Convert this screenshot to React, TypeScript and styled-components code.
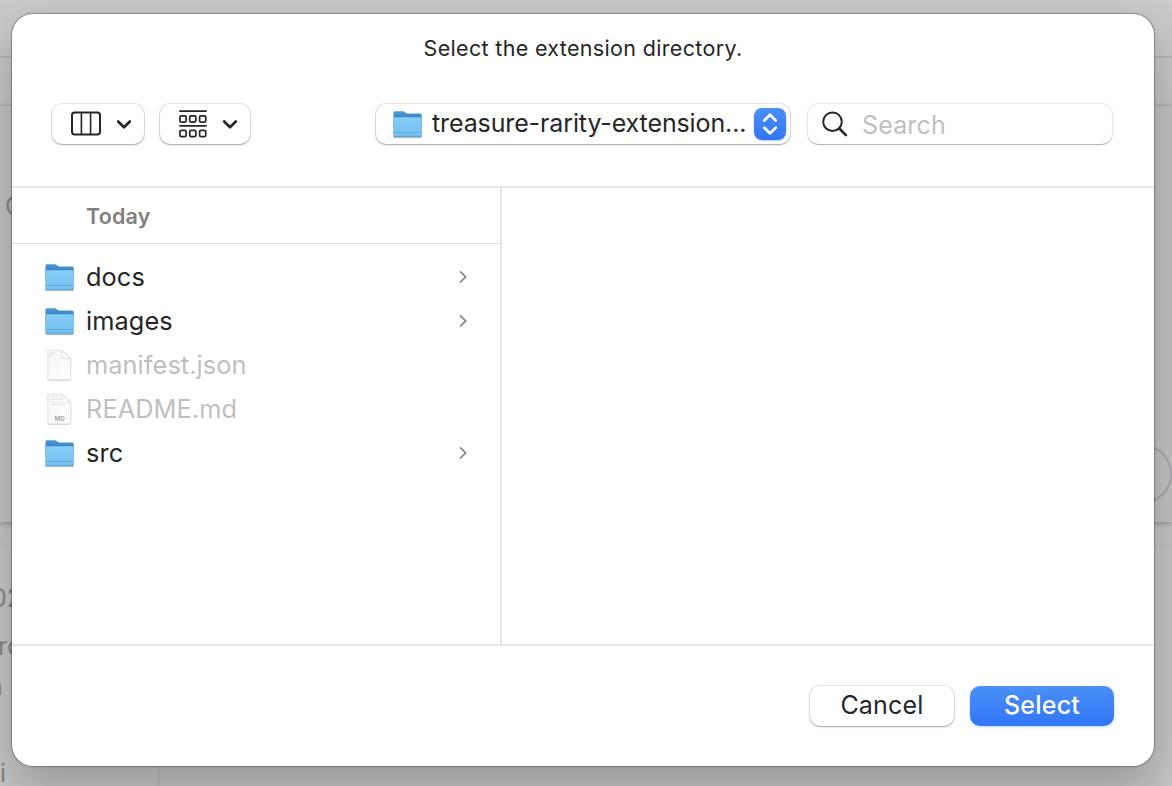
import React from "react";
import styled, { createGlobalStyle } from "styled-components";

const GlobalStyle = createGlobalStyle`
  * { box-sizing: border-box; }
  html, body { margin: 0; padding: 0; overflow: hidden; }
  body { font-family: Inter, "Liberation Sans", sans-serif; color: #262626; }
  button { font-family: inherit; color: inherit; border: 0; padding: 0; margin: 0; }
`;

const Window = styled.div`
  position: relative;
  width: 1172px;
  height: 786px;
  overflow: hidden;
  display: flex;
  flex-direction: column;
  background: #cbcbcb;
`;

const BackTitleBar = styled.div`
  height: 58px;
  flex: none;
  border-bottom: 2px solid #b9b9b9;
`;

const BackToolbar = styled.div`
  height: 48px;
  flex: none;
  background: #cbcbcb;
  border-bottom: 1px solid #c3c3c3;
`;

const BackCard = styled.div`
  height: 416px;
  flex: none;
  display: flex;
  justify-content: space-between;
  background: #c8c8c8;
  box-shadow: 0 1px 6px rgba(0, 0, 0, 0.3);
`;

const BackText = styled.span<{ $size: number; $top?: number; $left?: number }>`
  display: block;
  font-size: ${(p) => p.$size}px;
  line-height: 30px;
  height: 30px;
  color: #8b8b8b;
  white-space: nowrap;
  margin-top: ${(p) => p.$top ?? 0}px;
  margin-left: ${(p) => p.$left ?? 0}px;
`;

const BackRound = styled.div`
  width: 60px;
  height: 60px;
  margin-top: 338px;
  border: 2px solid #acacb2;
  border-radius: 50%;
`;

const BackLower = styled.div`
  flex: 1;
  margin-top: 23px;
  display: flex;
  border-top: 1px solid #c1c1c1;
`;

const BackSidebar = styled.div`
  width: 159px;
  border-right: 1px solid #bababa;
  background: #cccccc;
`;

const Dialog = styled.div`
  position: absolute;
  left: 12px;
  top: 14px;
  width: 1142px;
  height: 752px;
  display: flex;
  flex-direction: column;
  border-radius: 21px;
  background: #fff;
  box-shadow: 0 0 0 1px rgba(0, 0, 0, 0.2), 0 0 3px rgba(0, 0, 0, 0.2),
    0 24px 50px 6px rgba(0, 0, 0, 0.24);
`;

const Header = styled.header`
  height: 174px;
  flex: none;
  border-bottom: 2px solid #e5e5e5;
`;

const Title = styled.h1`
  margin: 0;
  padding-top: 20px;
  height: 89px;
  font-size: 21.5px;
  line-height: 28px;
  font-weight: 400;
  letter-spacing: 0.33px;
  text-align: center;
`;

const Toolbar = styled.div`
  display: flex;
  align-items: center;
  padding: 0 41px 0 40px;
  height: 42px;
`;

const Control = styled.button<{ $width: number; $gap?: number }>`
  display: flex;
  align-items: center;
  flex: none;
  width: ${(p) => p.$width}px;
  height: 40px;
  margin-right: ${(p) => p.$gap ?? 0}px;
  border-radius: 10px;
  background: #fff;
  box-shadow: 0 0 0 1px rgba(0, 0, 0, 0.08), 0 1px 1px rgba(0, 0, 0, 0.16),
    0 1px 3px rgba(0, 0, 0, 0.16);
`;

const FolderName = styled.span`
  flex: none;
  width: 321px;
  margin-left: 8px;
  text-align: left;
  font-size: 25px;
  line-height: 36px;
  height: 38px;
  letter-spacing: -0.12px;
  white-space: nowrap;
`;

const Stepper = styled.span`
  display: flex;
  width: 32px;
  height: 32px;
  margin-left: 1px;
  border-radius: 8px;
  background: linear-gradient(#4a90f8, #3175f6);
  box-shadow: 0 1px 2px rgba(49, 117, 246, 0.35);
`;

const SearchField = styled.label`
  display: flex;
  align-items: center;
  width: 304px;
  height: 40px;
  padding-left: 13px;
  border-radius: 10px;
  box-shadow: 0 0 0 1px rgba(0, 0, 0, 0.08), 0 1px 1px rgba(0, 0, 0, 0.24);
`;

const Placeholder = styled.span`
  margin-left: 13px;
  padding-top: 2px;
  font-size: 25px;
  line-height: 38px;
  letter-spacing: 0.15px;
  color: #bfbfbf;
`;

const Browser = styled.main`
  display: flex;
  height: 456px;
  flex: none;
`;

const Column = styled.section`
  width: 490px;
  border-right: 2px solid #e5e5e5;
`;

const GroupHeading = styled.h2`
  margin: 0;
  height: 56px;
  padding-left: 74px;
  border-bottom: 1px solid #dcdcdc;
  font-size: 21.5px;
  font-weight: 600;
  line-height: 57px;
  letter-spacing: 0.2px;
  color: #808080;
`;

const FileList = styled.ul`
  list-style: none;
  margin: 0;
  padding: 11px 31px 0 32px;
`;

const FileRow = styled.li<{ $dimmed?: boolean }>`
  display: flex;
  align-items: center;
  height: 44px;
  font-size: 25.3px;
  color: ${(p) => (p.$dimmed ? "#bfbfbf" : "#262626")};
`;

const FileName = styled.span`
  flex: 1;
  margin-left: 10px;
  line-height: 42px;
  letter-spacing: 0.1px;
`;

const Footer = styled.footer`
  display: flex;
  flex: 1;
  justify-content: flex-end;
  gap: 16px;
  padding: 40px 40px 0 0;
  border-top: 2px solid #e5e5e5;
`;

const ActionButton = styled.button<{ $primary?: boolean }>`
  width: 144px;
  height: 40px;
  border-radius: 10px;
  padding-bottom: 2px;
  font-size: 25px;
  line-height: 38px;
  letter-spacing: 0.2px;
  font-weight: ${(p) => (p.$primary ? 500 : 400)};
  color: ${(p) => (p.$primary ? "#fff" : "#262626")};
  background: ${(p) => (p.$primary ? "linear-gradient(#4a90f8, #3175f6)" : "#fff")};
  box-shadow: ${(p) =>
    p.$primary
      ? "0 1px 3px rgba(49, 117, 246, 0.3)"
      : "0 0 0 1px rgba(0,0,0,.08), 0 1px 1px rgba(0,0,0,.16), 0 1px 3px rgba(0,0,0,.16)"};
`;

const Icon = styled.svg<{ $left?: number }>`
  display: block;
  flex: none;
  margin-left: ${(p) => p.$left ?? 0}px;
`;

const FolderIcon = ({ left = 0 }: { left?: number }) => (
  <Icon $left={left} width="32" height="32" viewBox="0 0 32 32">
    <defs>
      <linearGradient id="folderFront" x1="0" y1="0" x2="0" y2="1">
        <stop offset="0" stopColor="#86cdf9" />
        <stop offset="1" stopColor="#74c0f1" />
      </linearGradient>
      <linearGradient id="folderBack" x1="0" y1="0" x2="0" y2="1">
        <stop offset="0" stopColor="#4d9bd6" />
        <stop offset="0.35" stopColor="#3a86c6" />
      </linearGradient>
    </defs>
    <path d="M1.500 10h28v19q0 1.300-1.300 1.300H2.800q-1.300 0-1.300-1.300z" fill="#000" opacity=".2" />
    <path d="M1 9h29v19.300q0 1.400-1.400 1.400H2.400Q1 29.700 1 28.300z" fill="#000" opacity=".13" />
    <path d="M1.500 4.600Q1.500 3.200 3 3.200h7.800c1.700 0 2.300 2.200 4.200 2.200h13.200q1.500 0 1.500 1.500V20H1.500z" fill="url(#folderBack)" />
    <path d="M1.500 10.400q0-1.200 1.200-1.200h25.800q1.200 0 1.200 1.200v17.300q0 1.200-1.200 1.200H2.700q-1.200 0-1.200-1.200z" fill="url(#folderFront)" />
    <path d="M1.500 24.500h28.200" stroke="#5eacdc" strokeWidth=".9" />
    <path d="M1.800 28.400h27.600" stroke="#5aa6d6" strokeWidth=".9" />
  </Icon>
);

const DocumentIcon = ({ label }: { label?: string }) => (
  <Icon width="32" height="34" viewBox="0 0 32 34">
    <defs>
      <linearGradient id="paper" x1="0" y1="0" x2="1" y2="1">
        <stop offset="0" stopColor="#f6f6f6" />
        <stop offset="1" stopColor="#fefefe" />
      </linearGradient>
    </defs>
    <path
      d="M5 2.500H18L26.700 10.800V31.300q0 1-1 1H5q-1 0-1-1V3.500q0-1 1-1z"
      fill="none" stroke="#000" strokeOpacity=".06" strokeWidth="2"
    />
    <path d="M5 2.500H18L26.500 10.800V31q0 1-1 1H5q-1 0-1-1V3.500q0-1 1-1z" fill="url(#paper)" stroke="#e2e2e2" strokeWidth=".8" />
    <path d="M4.500 32.200h21.500" stroke="#cfcfcf" strokeWidth=".8" />
    <path d="M18 2.700v6.600q0 1.500 1.500 1.500h6.800z" fill="#fff" stroke="#d9d9d9" strokeWidth=".8" />
    {label ? (
      <>
        <path d="M7 5h8M7 7.500h10M7 9.800h9M7 12.500h14" stroke="#dedede" strokeWidth=".8" />
        <text x="15.700" y="28.700" textAnchor="middle" fontSize="6" fontWeight="500" fill="#8c8c8c">{label}</text>
      </>
    ) : (
      <path d="M6.500 5h5M6.500 7h2.500" stroke="#d8d8d8" strokeWidth=".8" />
    )}
  </Icon>
);

const DisclosureIcon = () => (
  <Icon width="12" height="16" viewBox="0 0 12 16">
    <path d="M3 2.300L8.700 7.900L3 13.500" fill="none" stroke="#858585" strokeWidth="1.700" />
  </Icon>
);

const ChevronDown = ({ left }: { left: number }) => (
  <Icon $left={left} width="16" height="12" viewBox="0 0 16 12">
    <path d="M2.200 3.500L8 9.300L13.800 3.500" fill="none" stroke="#262626" strokeWidth="2.700" strokeLinecap="round" strokeLinejoin="round" />
  </Icon>
);

const ColumnsIcon = () => (
  <Icon $left={19} width="30" height="26" viewBox="0 0 30 26">
    <rect x="1" y="1.500" width="28" height="22" rx="2.700" fill="none" stroke="#262626" strokeWidth="2" />
    <path d="M10.400 2v22M19.600 2v22" stroke="#262626" strokeWidth="1.600" />
  </Icon>
);

const GroupIcon = () => (
  <Icon $left={19} width="28" height="28" viewBox="0 0 28 28">
    <path d="M1 1.200h26M1 15.800h26" stroke="#262626" strokeWidth="1.800" strokeLinecap="round" />
    {[5.900, 20.400].map((y) =>
      [0.900, 10.700, 20.600].map((x) => (
        <rect key={`${x}-${y}`} x={x} y={y} width="6.200" height="6.200" rx="1.300" fill="none" stroke="#262626" strokeWidth="1.700" />
      ))
    )}
  </Icon>
);

type Entry = { name: string; kind: "folder" | "document"; label?: string };

const entries: Entry[] = [
  { name: "docs", kind: "folder" },
  { name: "images", kind: "folder" },
  { name: "manifest.json", kind: "document" },
  { name: "README.md", kind: "document", label: "MD" },
  { name: "src", kind: "folder" },
];

export default function App() {
  return (
    <>
      <GlobalStyle />
      <Window>
        <BackTitleBar />
        <BackToolbar />
        <BackCard>
          <BackText $size={25} $top={85} $left={5}>C</BackText>
          <BackRound />
        </BackCard>
        <BackLower>
          <BackSidebar>
            <BackText $size={25} $top={37} $left={-9}>02</BackText>
            <BackText $size={25} $top={18} $left={-2}>ro</BackText>
            <BackText $size={25} $top={10} $left={-12}>n</BackText>
            <BackText $size={25} $top={57} $left={0}>i</BackText>
          </BackSidebar>
        </BackLower>

        <Dialog role="dialog">
          <Header>
            <Title>Select the extension directory.</Title>
            <Toolbar>
              <Control $width={92} $gap={16}>
                <ColumnsIcon />
                <ChevronDown left={15} />
              </Control>
              <Control $width={90} $gap={126}>
                <GroupIcon />
                <ChevronDown left={15} />
              </Control>
              <Control $width={414} $gap={18}>
                <FolderIcon left={16} />
                <FolderName>treasure-rarity-extension...</FolderName>
                <Stepper>
                  <Icon width="32" height="32" viewBox="0 0 32 32">
                    <path d="M10.300 12.500L16 6.800l5.700 5.700M10.300 19.700l5.700 5.700 5.700-5.700" fill="none" stroke="#fff" strokeWidth="2.700" strokeLinecap="round" strokeLinejoin="round" />
                  </Icon>
                </Stepper>
              </Control>
              <SearchField>
                <Icon width="28" height="28" viewBox="0 0 28 28">
                  <circle cx="11.500" cy="11.700" r="9.300" fill="none" stroke="#262626" strokeWidth="2" />
                  <path d="M18.300 18.500l6.600 6.600" stroke="#262626" strokeWidth="2.600" strokeLinecap="round" />
                </Icon>
                <Placeholder>Search</Placeholder>
              </SearchField>
            </Toolbar>
          </Header>
          <Browser>
            <Column>
              <GroupHeading>Today</GroupHeading>
              <FileList>
                {entries.map((entry) => (
                  <FileRow key={entry.name} $dimmed={entry.kind === "document"}>
                    {entry.kind === "folder" ? <FolderIcon /> : <DocumentIcon label={entry.label} />}
                    <FileName>{entry.name}</FileName>
                    {entry.kind === "folder" && <DisclosureIcon />}
                  </FileRow>
                ))}
              </FileList>
            </Column>
          </Browser>
          <Footer>
            <ActionButton>Cancel</ActionButton>
            <ActionButton $primary>Select</ActionButton>
          </Footer>
        </Dialog>
      </Window>
    </>
  );
}
